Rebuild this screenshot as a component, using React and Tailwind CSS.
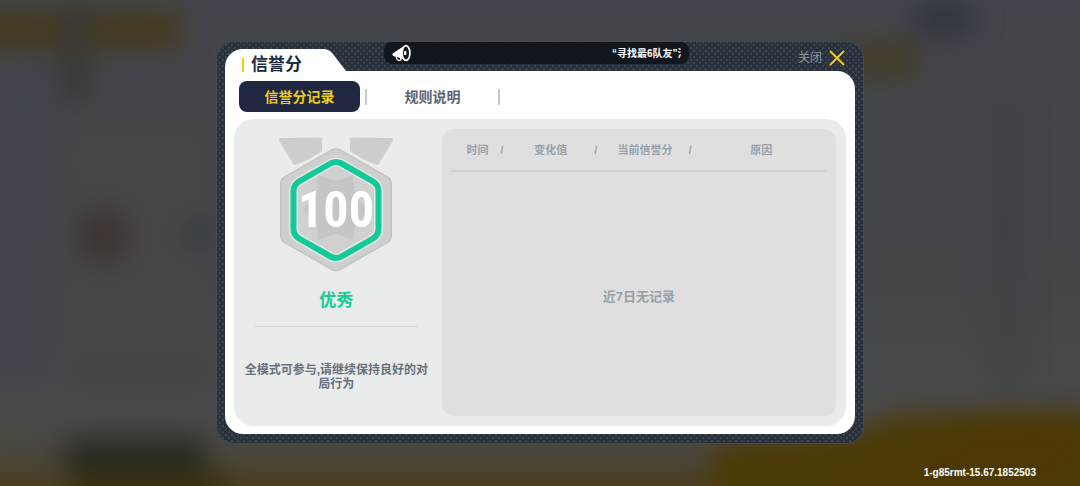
import React, { useState } from 'react';

const tabs = ['信誉分记录', '规则说明'];

const columns = [
  { label: '时间', width: 'w-[14%]' },
  { label: '变化值', width: 'w-[25%]' },
  { label: '当前信誉分', width: 'w-[25%]' },
  { label: '原因', width: 'w-[36%]' },
];

// Blurred lobby behind the dialog
const Backdrop = () => (
  <svg
    className="absolute inset-0 h-full w-full"
    viewBox="0 0 1080 486"
    preserveAspectRatio="none"
    aria-hidden="true"
  >
    <defs>
      <filter id="soft" x="-50%" y="-50%" width="200%" height="200%" colorInterpolationFilters="sRGB">
        <feGaussianBlur stdDeviation="14" />
      </filter>
      <linearGradient id="base" x1="0" y1="0" x2="0" y2="1">
        <stop offset="0" stopColor="#42454b" />
        <stop offset="0.5" stopColor="#444449" />
        <stop offset="0.85" stopColor="#484949" />
        <stop offset="1" stopColor="#4a4535" />
      </linearGradient>
    </defs>
    <rect width="1080" height="486" fill="url(#base)" />
    <g filter="url(#soft)">
      <rect x="-30" y="60" width="80" height="320" fill="#41444b" />
      <rect x="60" y="120" width="160" height="270" fill="#464646" />
      <rect x="-40" y="12" width="220" height="36" fill="#44391a" />
      <rect x="62" y="0" width="26" height="100" fill="#393733" />
      <ellipse cx="103" cy="236" rx="26" ry="28" fill="#3b3330" />
      <ellipse cx="198" cy="234" rx="22" ry="18" fill="#394046" />
      <rect x="75" y="362" width="140" height="24" fill="#444640" />
      <rect x="-30" y="470" width="760" height="50" fill="#4b3f24" />
      <rect x="65" y="440" width="140" height="30" fill="#252622" />
      <rect x="70" y="474" width="160" height="40" fill="#3a300e" />
      <rect x="915" y="5" width="58" height="28" fill="#2e323b" />
      <rect x="840" y="42" width="76" height="36" fill="#443c26" />
      <rect x="996" y="100" width="22" height="280" fill="#3e4043" />
      <path d="M712 540V446L860 432L900 414H1120V540Z" fill="#4c3a05" />
    </g>
    <path d="M860 486L1000 415H1080V486Z" fill="#4e3500" opacity="0.5" filter="url(#soft)" />
  </svg>
);

const MegaphoneIcon = () => (
  <svg className="h-[18px] w-5 shrink-0" viewBox="0 0 20 18" fill="none" aria-hidden="true">
    <path d="M0.5 9.5L12 2C9.8 6 10 11 12.5 15.5L2 12.2C0.5 11.6 0 10.5 0.5 9.5Z" fill="#fff" />
    <path d="M4 13L5 15.2C5.8 16.6 8.3 16.8 9 15.6L8.5 14" stroke="#fff" strokeWidth="1.3" />
    <ellipse cx="14" cy="9" rx="3.9" ry="7.4" fill="#12161b" stroke="#fff" strokeWidth="1.7" />
    <ellipse cx="13.2" cy="9" rx="1.3" ry="2.3" fill="#fff" />
  </svg>
);

const CloseIcon = () => (
  <svg className="h-4 w-4" viewBox="0 0 16 16" stroke="#f0cb1c" strokeWidth="1.9" aria-hidden="true">
    <path d="M1 1L15 15M15 1L1 15" />
  </svg>
);

const hexPath = 'M60 21L108 48.5V101L60 128.5L12 101V48.5Z';
const ringPath =
  'M54.5 28.5Q60 25.5 65.5 28.5L97 46.5Q102.5 50 102.5 56V94Q102.5 100 97 103.5L65.5 121.5Q60 124.5 54.5 121.5L23 103.5Q17.5 100 17.5 94V56Q17.5 50 23 46.5Z';

const ScoreMedal = ({ score }) => (
  <svg className="h-[140px] w-[120px]" viewBox="0 0 120 140" role="img" aria-label={`信誉分 ${score}`}>
    <g fill="#cdcdcd" stroke="#cdcdcd" strokeWidth="4" strokeLinejoin="round">
      <path d="M5 5L44 4.5V18L19 28Z" />
      <path d="M115 5L76 4.5V18L101 28Z" />
    </g>
    <g strokeLinejoin="round">
      <path d={hexPath} fill="#e9ecea" stroke="#e9ecea" strokeWidth="22" />
      <path d={hexPath} fill="#c3c3c3" stroke="#c3c3c3" strokeWidth="16" />
      <path d={hexPath} fill="#cfcfcf" stroke="#cfcfcf" strokeWidth="13" />
    </g>
    <path d={ringPath} fill="#d0d0d0" stroke="#e2e8e5" strokeWidth="9" />
    <path
      d="M42 40L60 46L77 40L79 60L92 75L79 90L77 105L60 99L42 105L41 90L27 75L41 60Z"
      fill="#c5c5c5"
    />
    <path d={ringPath} fill="none" stroke="#14c997" strokeWidth="6" />
    <text
      x="60"
      y="92"
      textAnchor="middle"
      fill="#fff"
      className="font-['Liberation_Sans_Narrow','Roboto_Condensed','Roboto',sans-serif] text-[50px] font-bold"
    >
      {score}
    </text>
  </svg>
);

const RecordTable = ({ records }) => (
  <div className="flex-1 rounded-xl bg-[#dfdfdf] px-[9px]">
    <table className="w-full table-fixed border-collapse">
      <thead>
        <tr className="h-[42px] border-b-2 border-[#d0d1d1] text-[11px] text-[#98a1a9]">
          {columns.map((col, i) => (
            <th key={col.label} scope="col" className={`${col.width} p-0 font-bold`}>
              <div className="flex items-center pl-1 pt-px">
                <span className="flex-1 whitespace-nowrap text-center">{col.label}</span>
                {i < columns.length - 1 && <span aria-hidden="true">/</span>}
              </div>
            </th>
          ))}
        </tr>
      </thead>
      <tbody>
        {records.length === 0 && (
          <tr className="h-[245px]">
            <td colSpan={columns.length} className="p-0 pt-1.5 text-center text-[13px] font-bold text-[#98a1a9]">
              近7日无记录
            </td>
          </tr>
        )}
      </tbody>
    </table>
  </div>
);

const App = () => {
  const [activeTab, setActiveTab] = useState(0);

  return (
    <div className="relative min-h-screen overflow-hidden bg-[#434548] font-['Liberation_Sans','Noto_Sans_CJK_SC',sans-serif]">
      <Backdrop />

      <main className="relative mx-auto mt-[41px] w-3/5 rounded-[18px] border border-[#444a55] bg-[#29313c] bg-[radial-gradient(#3d4550_1px,transparent_1px),radial-gradient(#3d4550_1px,transparent_1px)] bg-[size:6px_6px] bg-[position:0_0,3px_3px] px-2 pb-[9px]">
        <header className="relative z-10 flex h-[29px] items-start">
          <div className="mt-[7px] flex h-[22px] w-[121px] shrink-0">
            <div className="flex h-[22px] flex-1 items-start rounded-tl-[18px] bg-white pl-[17px]">
              <span className="mt-[9px] h-[14px] w-[2px] shrink-0 bg-[#f0cb1c]" />
              <h1 className="ml-[7px] whitespace-nowrap text-[17px] font-bold leading-8 text-[#222b40]">
                信誉分
              </h1>
            </div>
            <svg className="h-[22px] w-6 shrink-0" viewBox="0 0 24 22" aria-hidden="true">
              <path d="M0 0C5 0 8 1 11 5L24 22H0Z" fill="#fff" />
            </svg>
          </div>

          <div className="ml-[38px] flex h-[22px] w-[305px] items-center justify-between rounded-lg bg-[#0d1116]/85 px-2">
            <MegaphoneIcon />
            <p className="w-[69px] overflow-hidden whitespace-nowrap text-[10px] font-bold text-white">
              “寻找最6队友”活动
            </p>
          </div>

          <button type="button" className="ml-auto mr-[10px] mt-2 flex items-center gap-[7px] text-xs text-[#8f98a0]">
            关闭
            <CloseIcon />
          </button>
        </header>

        <div className="rounded-b-[18px] rounded-tr-[18px] bg-white px-[9px] pb-2 pt-[10px]">
          <nav className="flex items-center gap-[5px] pl-[5px]">
            {tabs.map((tab, i) => (
              <React.Fragment key={tab}>
                <button
                  type="button"
                  onClick={() => setActiveTab(i)}
                  className={`h-[31px] w-[121px] rounded-lg pt-px text-sm font-bold ${
                    activeTab === i ? 'bg-[#1f2840] text-[#f0cb1c]' : 'text-[#5c6474]'
                  }`}
                >
                  {tab}
                </button>
                <span className="h-4 w-0.5 bg-[#c6c8ce]" />
              </React.Fragment>
            ))}
          </nav>

          <div className="mt-[7px] flex rounded-[20px] bg-[#e9ecea] py-[10px] pr-[10px]">
            <section className="mr-[3px] flex w-[34%] shrink-0 flex-col items-center px-2 pt-[6px]">
              <ScoreMedal score={100} />
              <h2 className="mt-[14px] text-[17px] font-bold leading-6 text-[#14cc98]">优秀</h2>
              <hr className="mt-[13px] w-[163px] border-[#d3d6d5]" />
              <p className="mt-9 text-center text-xs font-bold leading-[14px] text-[#687080]">
                全模式可参与,请继续保持良好的对局行为
              </p>
            </section>
            <RecordTable records={[]} />
          </div>
        </div>
      </main>

      <footer className="relative mt-[21px] flex justify-end pr-[44px] text-[10px] font-bold leading-4 text-white">
        1-g85rmt-15.67.1852503
      </footer>
    </div>
  );
};

export default App;
